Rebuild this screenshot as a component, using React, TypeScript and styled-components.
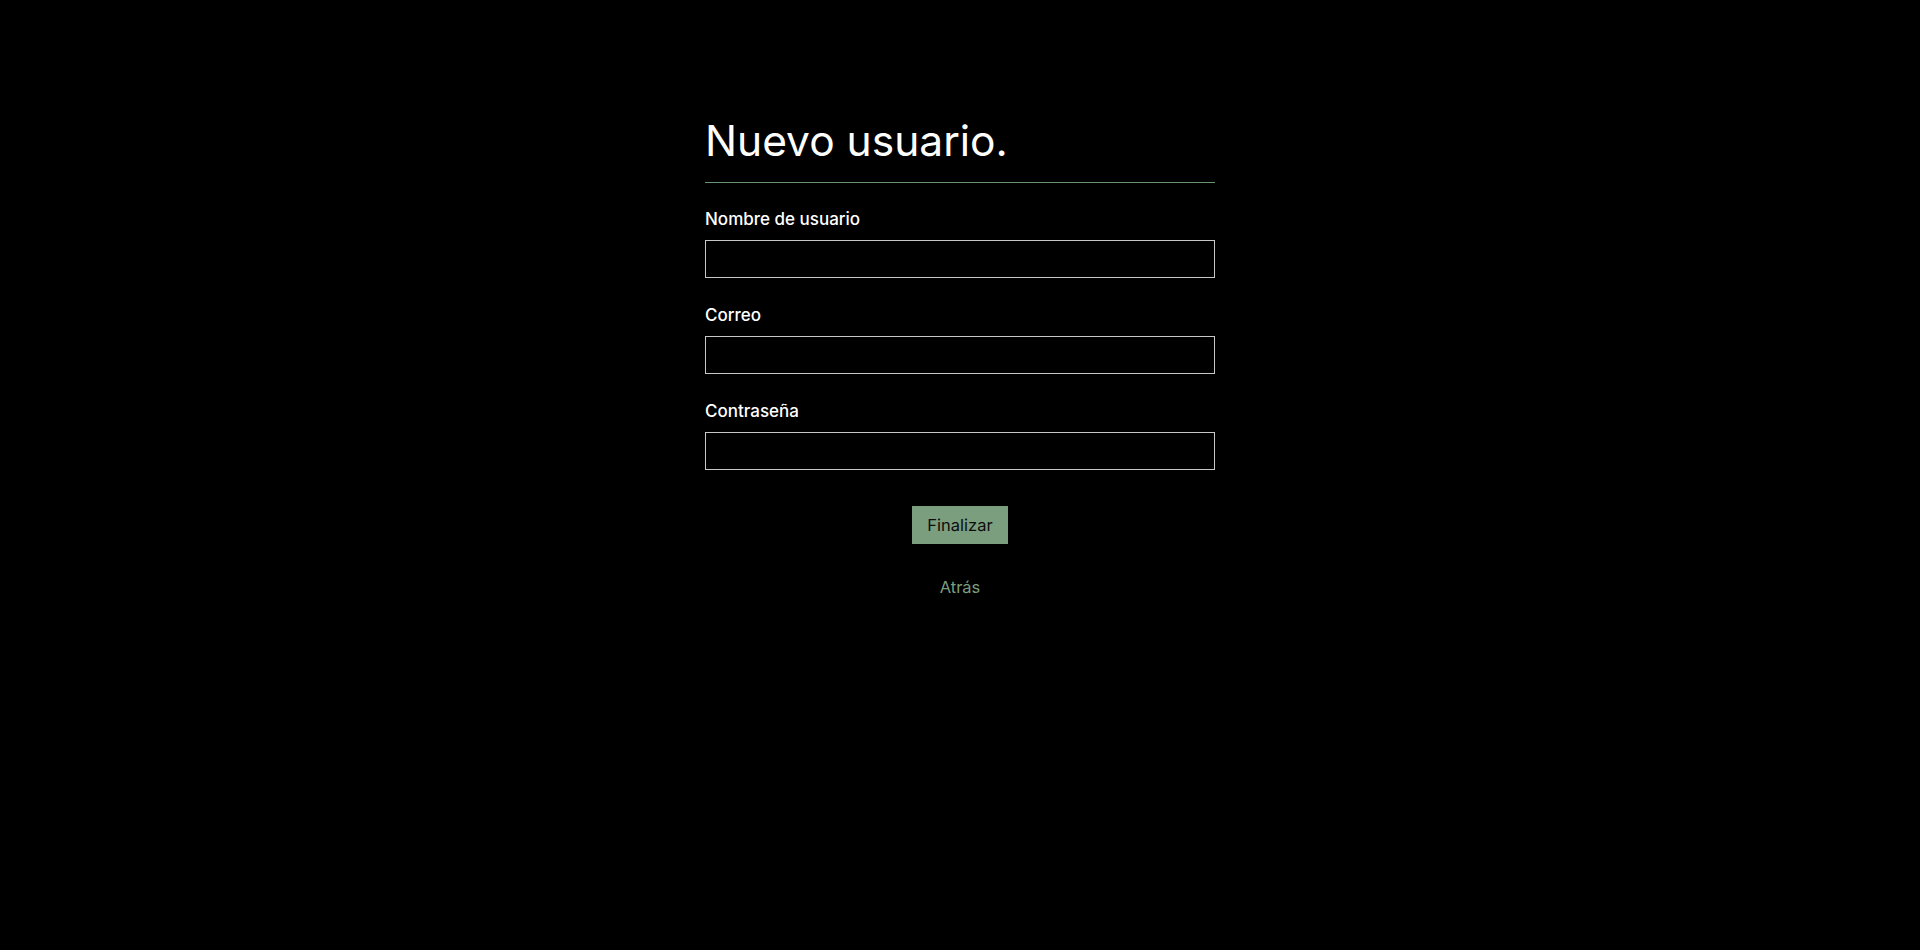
import styled, { createGlobalStyle } from "styled-components"

const GlobalStyle = createGlobalStyle`
  html, body {
    margin: 0;
    padding: 0;
    background: #000;
  }
  body {
    font-family: Inter, "Noto Sans", "Liberation Sans", sans-serif;
    color: #fff;
  }
`

const Page = styled.main`
  min-height: 950px;
  background: #000;
  display: flex;
  justify-content: center;
  padding-top: 116px;
  box-sizing: border-box;
`

const Form = styled.form`
  width: 510px;
  display: flex;
  flex-direction: column;
`

const Header = styled.div`
  border-bottom: 1px solid #6a9470;
  padding-bottom: 16px;
  margin-bottom: 26px;
`

const Title = styled.h1`
  margin: 0;
  font-size: 42.5px;
  line-height: 50px;
  font-weight: 400;
  color: #fff;
`

const Fields = styled.div`
  display: flex;
  flex-direction: column;
  gap: 27px;
`

const Field = styled.label`
  display: flex;
  flex-direction: column;
  gap: 11px;
`

const LabelText = styled.span`
  font-size: 17px;
  line-height: 20px;
  font-weight: 500;
  color: #fff;
`

const Input = styled.input`
  box-sizing: border-box;
  width: 100%;
  height: 38px;
  margin: 0;
  padding: 0 10px;
  background: transparent;
  border: 1px solid #c8c8c8;
  border-radius: 0;
  color: #fff;
  font: inherit;
  font-size: 16px;
  outline: none;
`

const Actions = styled.div`
  display: flex;
  flex-direction: column;
  align-items: center;
  margin-top: 36px;
  gap: 33px;
`

const SubmitButton = styled.button`
  height: 38px;
  padding: 0 15px;
  background: #7a9e7e;
  border: none;
  border-radius: 0;
  color: #0d0d0d;
  font-family: inherit;
  font-size: 16.5px;
  font-weight: 400;
  cursor: pointer;
`

const BackLink = styled.a`
  font-size: 16.5px;
  line-height: 20px;
  color: #7a9e7e;
  text-decoration: none;
  cursor: pointer;
`

const fields = [
  { label: "Nombre de usuario", type: "text" },
  { label: "Correo", type: "email" },
  { label: "Contraseña", type: "password" }
]

const App = () => (
  <>
    <GlobalStyle />
    <Page>
      <Form onSubmit={ e => e.preventDefault() }>
        <Header>
          <Title>Nuevo usuario.</Title>
        </Header>
        <Fields>
          { fields.map(field => (
            <Field key={ field.label }>
              <LabelText>{ field.label }</LabelText>
              <Input type={ field.type } />
            </Field>
          )) }
        </Fields>
        <Actions>
          <SubmitButton type="submit">Finalizar</SubmitButton>
          <BackLink>Atrás</BackLink>
        </Actions>
      </Form>
    </Page>
  </>
)

export default App
